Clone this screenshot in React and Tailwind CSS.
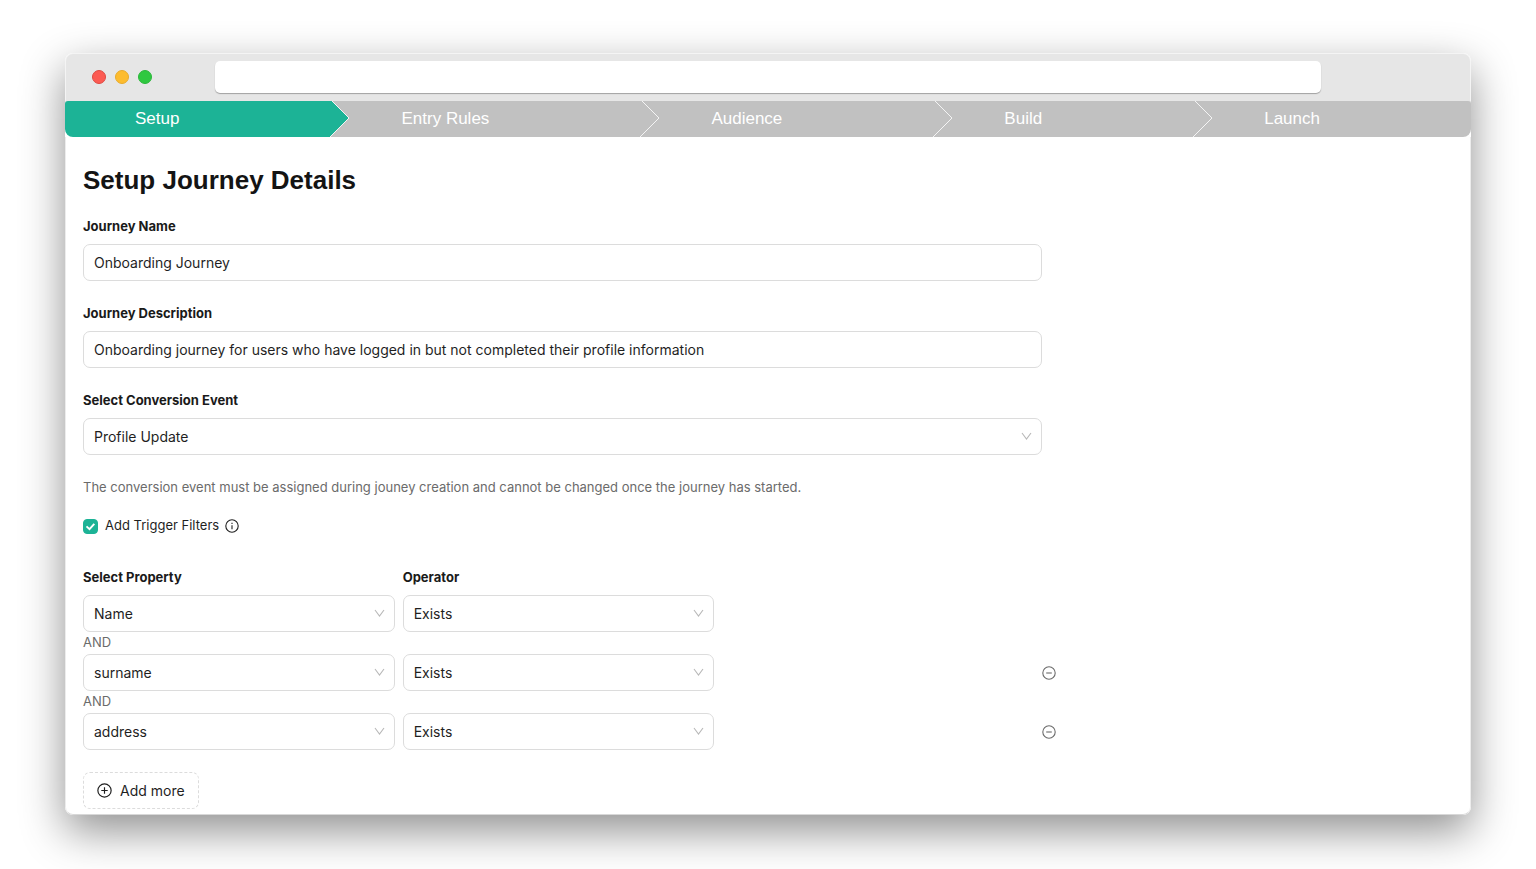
import { useState } from 'react';
import clsx from 'clsx';

const STEPS = ['Setup', 'Entry Rules', 'Audience', 'Build', 'Launch'];
const EVENTS = ['Profile Update', 'Sign Up', 'Purchase'];
const PROPERTIES = ['Name', 'surname', 'address'];
const OPERATORS = ['Exists', 'Does not exist', 'Equals'];

function StepTab({ label, active, first, last }) {
  return (
    <li className="flex flex-auto">
      <button
        type="button"
        className={clsx(
          'flex-auto h-9 pb-px text-left text-[17px] text-white whitespace-nowrap',
          first ? 'pl-[70px]' : 'pl-[51px]',
          active ? 'bg-[#1cb396]' : 'bg-[#c1c1c1]'
        )}
      >
        {label}
      </button>
      {!last && (
        <svg className="shrink-0 w-5 h-9 bg-[#c1c1c1]" viewBox="0 0 20 36">
          <path
            d="M-2 0H2L19 17L0 36H-2Z"
            className={active ? 'fill-[#1cb396]' : 'fill-[#c1c1c1]'}
          />
          <path d="M2 0L19 17L0 36" fill="none" stroke="#f4f4f4" strokeWidth="1" />
        </svg>
      )}
    </li>
  );
}

function Select({ id, label, options, value, onChange }) {
  return (
    <div className="relative">
      <select
        id={id}
        aria-label={label}
        value={value}
        onChange={(e) => onChange(e.target.value)}
        className="appearance-none block w-full h-[37px] pl-[10px] pr-8 bg-white border border-[#dcdcdc] rounded-[7px] text-[14px] text-[#1f1f1f]"
      >
        {options.map((option) => (
          <option key={option}>{option}</option>
        ))}
      </select>
      <svg
        className="absolute right-[10px] top-3 w-[11px] h-3 pointer-events-none"
        viewBox="0 0 11 12"
        fill="none"
        stroke="#b8b8b8"
        strokeWidth="1.1"
      >
        <path d="M1 3L5.5 9L10 3" />
      </svg>
    </div>
  );
}

function CircleIcon({ className, children }) {
  return (
    <svg className={className} viewBox="0 0 14 14" fill="none" stroke="currentColor" strokeWidth="1.1">
      <circle cx="7" cy="7" r="6.2" />
      {children}
    </svg>
  );
}

function TitleBar() {
  return (
    <div className="flex items-start h-12 pt-[7px] bg-[#e6e6e6] border border-b-0 border-[#f4f4f4] rounded-t-lg">
      <div className="flex gap-[9px] w-[149px] pl-[26px] pt-[9px]">
        <span className="w-[14px] h-[14px] rounded-full bg-[#fc5b53] border border-[#dd4a42]" />
        <span className="w-[14px] h-[14px] rounded-full bg-[#fdbc2e] border border-[#e8ab2c]" />
        <span className="w-[14px] h-[14px] rounded-full bg-[#2fc840] border border-[#2bb73a]" />
      </div>
      <input
        type="text"
        aria-label="Address"
        className="flex-1 h-8 px-3 bg-white rounded-[5px] shadow-[0_1px_1px_rgba(0,0,0,0.3)]"
      />
      <div className="w-[149px]" />
    </div>
  );
}

export default function App() {
  const [name, setName] = useState('Onboarding Journey');
  const [description, setDescription] = useState(
    'Onboarding journey for users who have logged in but not completed their profile information'
  );
  const [event, setEvent] = useState('Profile Update');
  const [useFilters, setUseFilters] = useState(true);
  const [filters, setFilters] = useState([
    { property: 'Name', operator: 'Exists' },
    { property: 'surname', operator: 'Exists' },
    { property: 'address', operator: 'Exists' },
  ]);

  const updateFilter = (index, changes) => {
    setFilters(filters.map((f, i) => (i === index ? { ...f, ...changes } : f)));
  };

  const labelClass = 'block mb-[9px] text-[13px] leading-[18px] font-bold text-[#1a1a1a]';
  const inputClass =
    'block w-full h-[37px] px-[10px] bg-white border border-[#dcdcdc] rounded-[7px] text-[14px] text-[#1f1f1f]';

  return (
    <div className="min-h-screen bg-white px-[65px] py-[53px] font-['Inter',sans-serif]">
      <div className="bg-white rounded-lg overflow-hidden shadow-[0_16px_44px_rgba(0,0,0,0.44)]">
        <TitleBar />

        <nav className="bg-linear-to-b from-[#e6e6e6] from-50% to-white to-50%">
          <ol className="flex rounded-t-[3px] rounded-b-lg overflow-hidden font-['Liberation_Sans',Arial,sans-serif]">
            {STEPS.map((step, i) => (
              <StepTab
                key={step}
                label={step}
                active={i === 0}
                first={i === 0}
                last={i === STEPS.length - 1}
              />
            ))}
          </ol>
        </nav>

        <main className="px-[17px] pt-[27px] pb-[5px] border border-t-0 border-[#ececec] border-b-[#d8d8d8] rounded-b-lg">
          <h1 className="mb-[21px] text-[26px] leading-8 font-bold text-[#141414] font-['Liberation_Sans',Arial,sans-serif]">
            Setup Journey Details
          </h1>

          <div className="w-[70%]">
            <div className="mb-[23px]">
              <label htmlFor="name" className={labelClass}>Journey Name</label>
              <input
                id="name"
                type="text"
                value={name}
                onChange={(e) => setName(e.target.value)}
                className={inputClass}
              />
            </div>
            <div className="mb-[23px]">
              <label htmlFor="description" className={labelClass}>Journey Description</label>
              <input
                id="description"
                type="text"
                value={description}
                onChange={(e) => setDescription(e.target.value)}
                className={inputClass}
              />
            </div>
            <div className="mb-[23px]">
              <label htmlFor="event" className={labelClass}>Select Conversion Event</label>
              <Select id="event" options={EVENTS} value={event} onChange={setEvent} />
            </div>
          </div>

          <p className="mb-5 text-[13px] leading-[18px] text-[#6b6b6b]">
            The conversion event must be assigned during jouney creation and cannot be changed once the journey has started.
          </p>

          {/* Trigger filters toggle */}
          <div className="flex items-center h-5 mb-8 text-[13px] text-[#1f1f1f]">
            <label className="flex items-center gap-[7px]">
              <span className="relative flex">
                <input
                  type="checkbox"
                  checked={useFilters}
                  onChange={(e) => setUseFilters(e.target.checked)}
                  className="peer appearance-none w-[15px] h-[15px] rounded-[4px] border border-[#dcdcdc] checked:border-[#1cb396] checked:bg-[#1cb396]"
                />
                <svg
                  className="absolute inset-0 w-[15px] h-[15px] hidden peer-checked:block pointer-events-none"
                  viewBox="0 0 15 15"
                  fill="none"
                  stroke="white"
                  strokeWidth="1.9"
                >
                  <path d="M3.5 7.4L6.5 10.2L11.3 4.9" />
                </svg>
              </span>
              Add Trigger Filters
            </label>
            <CircleIcon className="ml-1.5 w-[14px] h-[14px]">
              <path d="M7 6.2V10.3M7 3.8V5" />
            </CircleIcon>
          </div>

          {useFilters && (
            <>
              <div className="grid grid-cols-3 gap-2 w-[70%] pr-2">
                <span className={labelClass}>Select Property</span>
                <span className={labelClass}>Operator</span>
              </div>
              {filters.map((filter, i) => (
                <div key={i}>
                  {i > 0 && (
                    <div className="h-[22px] text-[13px] leading-5 text-[#6b6b6b]">AND</div>
                  )}
                  <div className="flex items-center">
                    <div className="grid grid-cols-3 gap-2 w-[70%] pr-2">
                      <Select
                        label="Select Property"
                        options={PROPERTIES}
                        value={filter.property}
                        onChange={(property) => updateFilter(i, { property })}
                      />
                      <Select
                        label="Operator"
                        options={OPERATORS}
                        value={filter.operator}
                        onChange={(operator) => updateFilter(i, { operator })}
                      />
                    </div>
                    {i > 0 && (
                      <button
                        type="button"
                        aria-label="Remove filter"
                        onClick={() => setFilters(filters.filter((_, j) => j !== i))}
                        className="text-[#6b6b6b]"
                      >
                        <CircleIcon className="w-[14px] h-[14px]">
                          <path d="M4.2 7H9.8" />
                        </CircleIcon>
                      </button>
                    )}
                  </div>
                </div>
              ))}
              <button
                type="button"
                onClick={() => setFilters([...filters, { property: 'Name', operator: 'Exists' }])}
                className="flex items-center gap-2 h-[37px] mt-[22px] px-[13px] border border-dashed border-[#dcdcdc] rounded-[7px] text-[14px] text-[#1f1f1f]"
              >
                <CircleIcon className="w-[15px] h-[15px]">
                  <path d="M4 7H10M7 4V10" />
                </CircleIcon>
                Add more
              </button>
            </>
          )}
        </main>
      </div>
    </div>
  );
}
